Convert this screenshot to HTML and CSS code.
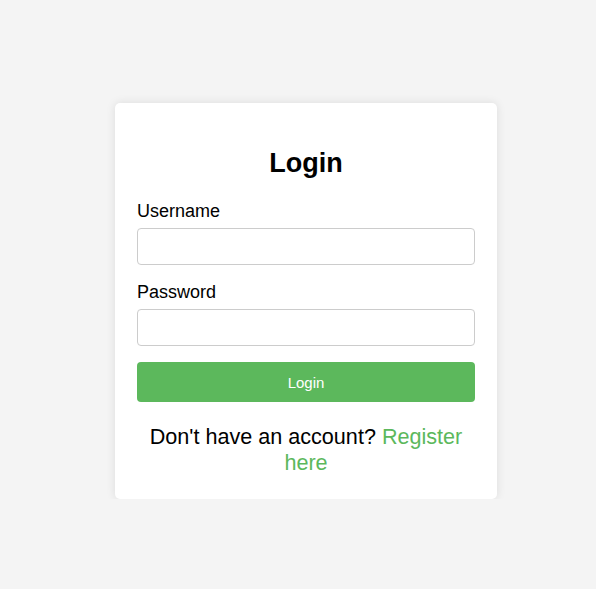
FILE: index.html
```html
<!DOCTYPE html>
<html>
<head>
<meta charset="utf-8">
<link rel="stylesheet" href="styles.css">
</head>
<body>
<div class="page">
  <div class="card">
    <h2 class="title">Login</h2>
    <form class="form">
      <label class="label label-user" for="u">Username</label>
      <input class="input" id="u" type="text">
      <label class="label label-pass" for="p">Password</label>
      <input class="input" id="p" type="password">
      <button class="btn" type="button">Login</button>
    </form>
    <p class="note">Don't have an account? <a class="link" href="#">Register here</a></p>
  </div>
</div>
</body>
</html>
```
FILE: styles.css
```css
html, body {
  margin: 0;
  padding: 0;
  background: #f4f4f4;
  font-family: "Liberation Sans", Arial, sans-serif;
}
.page {
  padding: 103px 0 0 115px;
}
.card {
  box-sizing: border-box;
  width: 382px;
  background: #fff;
  border-radius: 5px;
  box-shadow: 0 0 10px rgba(0, 0, 0, 0.1);
  padding: 44px 22px 23px;
}
.title {
  margin: 0 0 22px;
  font-size: 27px;
  line-height: 32px;
  font-weight: bold;
  text-align: center;
  color: #000;
}
.form {
  display: flex;
  flex-direction: column;
  margin: 0;
}
.label {
  font-size: 18px;
  line-height: 21px;
  color: #000;
}
.label-user {
  margin-bottom: 6px;
}
.label-pass {
  margin-top: 17px;
  margin-bottom: 6px;
}
.input {
  box-sizing: border-box;
  width: 338px;
  height: 37px;
  margin: 0;
  border: 1px solid #ccc;
  border-radius: 4px;
  background: #fff;
  padding: 0 8px;
  font-size: 16px;
}
.btn {
  margin-top: 16px;
  width: 338px;
  height: 40px;
  border: none;
  border-radius: 4px;
  background: #5cb85c;
  color: #fff;
  font-family: "Liberation Sans", Arial, sans-serif;
  font-size: 15px;
  cursor: pointer;
}
.note {
  margin: 22px 0 0;
  font-size: 21.6px;
  line-height: 26px;
  text-align: center;
  color: #000;
}
.link {
  color: #5cb85c;
  text-decoration: none;
}
```
